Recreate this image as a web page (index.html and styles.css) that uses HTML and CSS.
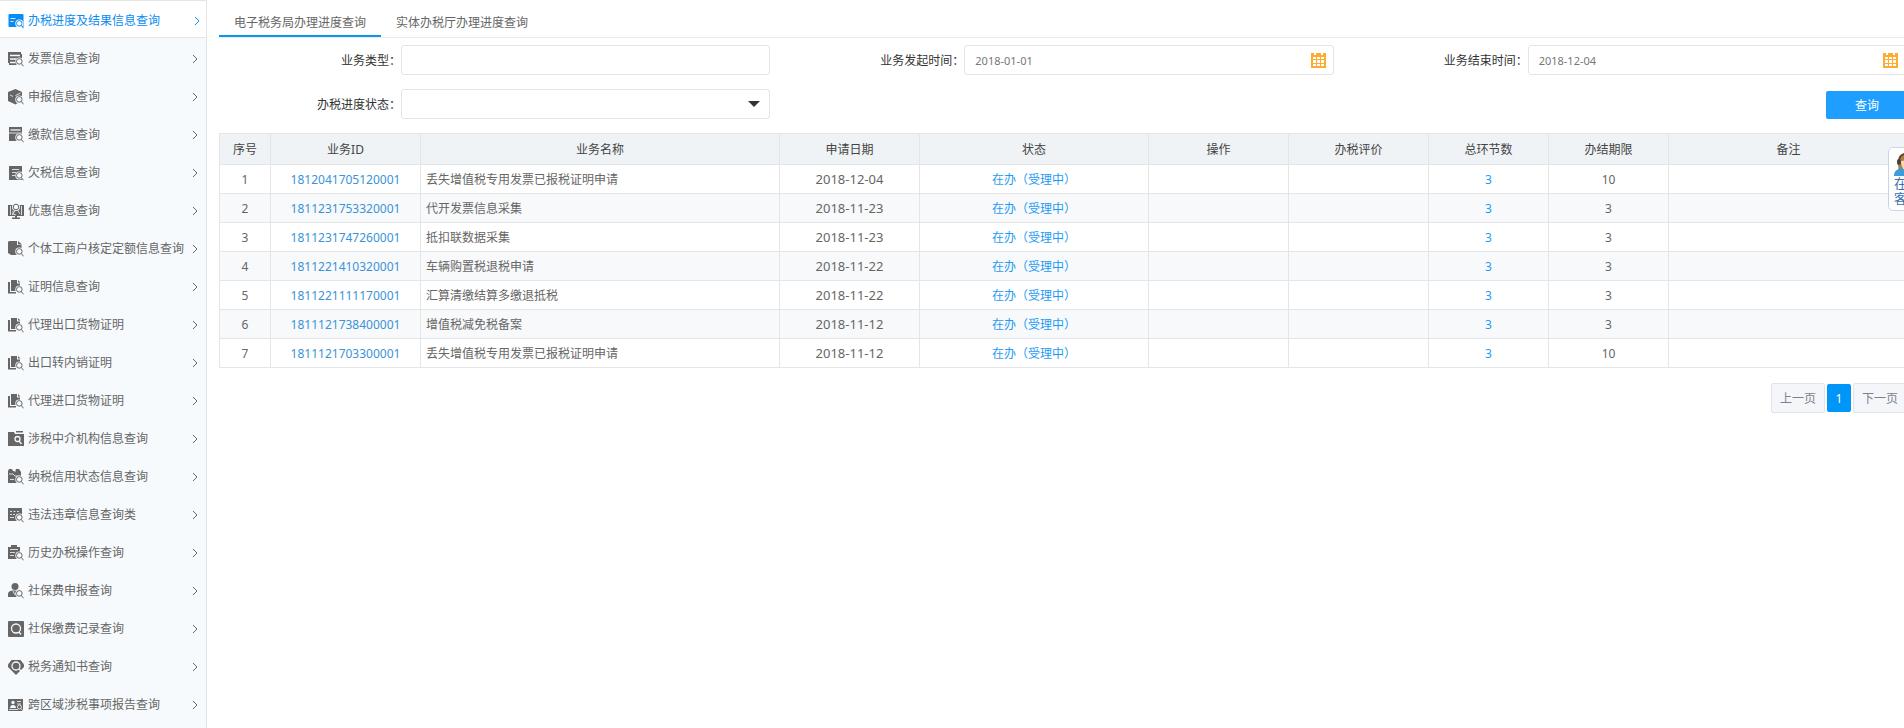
FILE: index.html
```html
<!DOCTYPE html>
<html lang="zh-CN">
<head>
<meta charset="utf-8">
<title>办税进度及结果信息查询</title>
<link rel="stylesheet" href="styles.css">
</head>
<body>
<svg class="sprite" aria-hidden="true">
  <symbol id="mag" viewBox="0 0 16 16">
    <circle class="bg" cx="11.3" cy="10.4" r="4"/>
    <circle class="line" cx="11.3" cy="10.4" r="2.8"/>
    <path class="line" d="M13.300 12.500l2.200 2.800"/>
  </symbol>
  <symbol id="i-card" viewBox="0 0 16 16"><path d="M1.500 1h13a1 1 0 0 1 1 1v12h-14a1 1 0 0 1-1-1V2a1 1 0 0 1 1-1z"/><path class="cut thin" d="M2.500 5.500h5M2.500 8.500h3"/><use href="#mag"/></symbol>
  <symbol id="i-invoice" viewBox="0 0 16 16"><path d="M0 1h13v2h1v11H1v-2H0z"/><path class="cut" d="M2 4.500h10M2 8h6M2 11.500h5"/><use href="#mag"/></symbol>
  <symbol id="i-box" viewBox="0 0 16 16"><path d="M7.500 0L14 3v8l-6.500 4.500L0 12V3z"/><path class="cut thin" d="M2 6l3 1.500M7.500 6.500l5-2.500"/><use href="#mag"/></symbol>
  <symbol id="i-pay" viewBox="0 0 16 16"><path d="M1 0h13v14H1z"/><path class="cut" d="M2.500 3h10"/><path class="cut thin" d="M1 6h13"/><use href="#mag"/></symbol>
  <symbol id="i-owe" viewBox="0 0 16 16"><path d="M1 1h13v14H1z"/><path class="cut thin" d="M4 4.500h7M4 7.500h4M4 10.500h3"/><use href="#mag"/></symbol>
  <symbol id="i-screen" viewBox="0 0 16 16"><path d="M0 2h16v11H0zM7 13h2v2H7zM4 14.500h8v1.500H4z"/><path class="cut thin" d="M2.500 3v9M13.500 3v9M4 12l3-4"/><circle class="bg" cx="8" cy="4" r="4"/><circle class="line" cx="8" cy="4" r="2.800"/><path class="cut thin" d="M9.500 7l2.500 4M5 8v3l3 1"/></symbol>
  <symbol id="i-file" viewBox="0 0 16 16"><path d="M1 0h8v4h4.500v10H3L0 12V1zM10 0l4 3.500h-4z"/><use href="#mag"/></symbol>
  <symbol id="i-docs" viewBox="0 0 16 16"><path d="M0 3h2v10h6v1.500H0zM3 1h6v3.500h3V12H3zM10 1l2.500 2.500H10z"/><use href="#mag"/></symbol>
  <symbol id="i-folder" viewBox="0 0 16 16"><path d="M0 1h6l1 2h9v12H0zM8 0h7v1.500H8z"/><circle class="cut" cx="9.500" cy="8" r="2.500"/><path class="cut" d="M11 10l2.500 3"/></symbol>
  <symbol id="i-credit" viewBox="0 0 16 16"><path d="M1 0h3l1 2h2l1-2h3l2 3v11H0V2z"/><path class="cut thin" d="M1 5h4l2 2h5M2 10.500h4M7 0v3"/><use href="#mag"/></symbol>
  <symbol id="i-rule" viewBox="0 0 16 16"><path d="M0 1h14v13H0z"/><path class="cut thin" d="M2 4.500h2M5.500 4.500h2M9 4.500h2M2 7.500h2M5 7.500h2M2 10.500h4"/><use href="#mag"/></symbol>
  <symbol id="i-board" viewBox="0 0 16 16"><path d="M0 2h3V0h6v2h3v12H0z"/><path class="cut thin" d="M2 4.500h8M2 7.500h5M2 10.500h4"/><use href="#mag"/></symbol>
  <symbol id="i-user" viewBox="0 0 16 16"><circle cx="7" cy="3.500" r="3.500"/><path d="M0 14v-3c0-2 2-3.500 5-3.500h4c3 0 4 2 4 6.500z"/><path class="cut thin" d="M5 8l2 4"/><use href="#mag"/></symbol>
  <symbol id="i-square" viewBox="0 0 16 16"><rect width="16" height="16" rx="1"/><circle class="cut" cx="8" cy="7.500" r="4.500"/><path class="cut" d="M11 11l2 2.500"/></symbol>
  <symbol id="i-badge" viewBox="0 0 16 16"><path d="M3.500 1h9L16 5.500V8l-8 8-8-8V5.500z"/><circle class="cut" cx="8" cy="7" r="4"/><circle cx="8" cy="7" r="2.400"/><path class="cut" d="M11 10l2 2"/></symbol>
  <symbol id="i-people" viewBox="0 0 16 16"><path d="M0 2h15v12H0z"/><circle class="bg" cx="5" cy="5.500" r="1.700"/><path class="bg" d="M2 11c0-4 6-4 6 0z"/><path class="cut thin" d="M9 4.500h4M9 7h4M1 12.500h9"/><circle class="cut thin" cx="11.500" cy="10" r="2"/><path class="cut thin" d="M13 11.500l2.500 3"/></symbol>
  <symbol id="chev" viewBox="0 0 6 10"><path class="line" d="M1 1l4 4-4 4"/></symbol>
  <symbol id="cal" viewBox="0 0 15 15"><path fill="#ffab30" d="M0 0h15v15H0z"/><path fill="#fff" d="M3 0h2v2H3zM10 0h2v2h-2zM2 4h11v9H2z"/><path fill="none" stroke="#ffab30" d="M5.500 4v9M9.500 4v9M2 6.500h11M2 10.500h11"/></symbol>
</svg>
<div class="page">
  <nav class="side" aria-label="查询菜单">
    <a class="item active" href="#"><svg class="ico"><use href="#i-card"/></svg><span>办税进度及结果信息查询</span><svg class="chev"><use href="#chev"/></svg></a>
    <a class="item" href="#"><svg class="ico"><use href="#i-invoice"/></svg><span>发票信息查询</span><svg class="chev"><use href="#chev"/></svg></a>
    <a class="item" href="#"><svg class="ico"><use href="#i-box"/></svg><span>申报信息查询</span><svg class="chev"><use href="#chev"/></svg></a>
    <a class="item" href="#"><svg class="ico"><use href="#i-pay"/></svg><span>缴款信息查询</span><svg class="chev"><use href="#chev"/></svg></a>
    <a class="item" href="#"><svg class="ico"><use href="#i-owe"/></svg><span>欠税信息查询</span><svg class="chev"><use href="#chev"/></svg></a>
    <a class="item" href="#"><svg class="ico"><use href="#i-screen"/></svg><span>优惠信息查询</span><svg class="chev"><use href="#chev"/></svg></a>
    <a class="item" href="#"><svg class="ico"><use href="#i-file"/></svg><span>个体工商户核定定额信息查询</span><svg class="chev"><use href="#chev"/></svg></a>
    <a class="item" href="#"><svg class="ico"><use href="#i-docs"/></svg><span>证明信息查询</span><svg class="chev"><use href="#chev"/></svg></a>
    <a class="item" href="#"><svg class="ico"><use href="#i-docs"/></svg><span>代理出口货物证明</span><svg class="chev"><use href="#chev"/></svg></a>
    <a class="item" href="#"><svg class="ico"><use href="#i-docs"/></svg><span>出口转内销证明</span><svg class="chev"><use href="#chev"/></svg></a>
    <a class="item" href="#"><svg class="ico"><use href="#i-docs"/></svg><span>代理进口货物证明</span><svg class="chev"><use href="#chev"/></svg></a>
    <a class="item" href="#"><svg class="ico"><use href="#i-folder"/></svg><span>涉税中介机构信息查询</span><svg class="chev"><use href="#chev"/></svg></a>
    <a class="item" href="#"><svg class="ico"><use href="#i-credit"/></svg><span>纳税信用状态信息查询</span><svg class="chev"><use href="#chev"/></svg></a>
    <a class="item" href="#"><svg class="ico"><use href="#i-rule"/></svg><span>违法违章信息查询类</span><svg class="chev"><use href="#chev"/></svg></a>
    <a class="item" href="#"><svg class="ico"><use href="#i-board"/></svg><span>历史办税操作查询</span><svg class="chev"><use href="#chev"/></svg></a>
    <a class="item" href="#"><svg class="ico"><use href="#i-user"/></svg><span>社保费申报查询</span><svg class="chev"><use href="#chev"/></svg></a>
    <a class="item" href="#"><svg class="ico"><use href="#i-square"/></svg><span>社保缴费记录查询</span><svg class="chev"><use href="#chev"/></svg></a>
    <a class="item" href="#"><svg class="ico"><use href="#i-badge"/></svg><span>税务通知书查询</span><svg class="chev"><use href="#chev"/></svg></a>
    <a class="item" href="#"><svg class="ico"><use href="#i-people"/></svg><span>跨区域涉税事项报告查询</span><svg class="chev"><use href="#chev"/></svg></a>
  </nav>

  <main class="main">
    <div class="tabs">
      <a class="tab on" href="#">电子税务局办理进度查询</a>
      <a class="tab" href="#">实体办税厅办理进度查询</a>
    </div>

    <form class="filters">
      <div class="field">
        <label for="type">业务类型：</label>
        <div class="control"><input id="type" type="text"></div>
      </div>
      <div class="field">
        <label for="from">业务发起时间：</label>
        <div class="control"><input id="from" type="text" value="2018-01-01"><svg class="cal"><use href="#cal"/></svg></div>
      </div>
      <div class="field last">
        <label for="to">业务结束时间：</label>
        <div class="control"><input id="to" type="text" value="2018-12-04"><svg class="cal"><use href="#cal"/></svg></div>
      </div>
      <div class="field">
        <label for="state">办税进度状态：</label>
        <div class="control"><select id="state"><option></option></select><svg class="caret" viewBox="0 0 12 6"><path d="M0 0h12L6 6z"/></svg></div>
      </div>
      <div class="actions"><button class="search" type="button">查询</button></div>
    </form>

    <table class="grid">
      <colgroup><col class="c-no"><col class="c-id"><col class="c-name"><col class="c-mid"><col class="c-state"><col class="c-mid"><col class="c-mid"><col class="c-num"><col class="c-num"><col></colgroup>
      <thead>
        <tr><th>序号</th><th>业务ID</th><th>业务名称</th><th>申请日期</th><th>状态</th><th>操作</th><th>办税评价</th><th>总环节数</th><th>办结期限</th><th>备注</th></tr>
      </thead>
      <tbody>
        <tr><td>1</td><td><a class="id" href="#">1812041705120001</a></td><td class="name">丢失增值税专用发票已报税证明申请</td><td class="date">2018-12-04</td><td><a href="#">在办（受理中）</a></td><td></td><td></td><td><a href="#">3</a></td><td>10</td><td></td></tr>
        <tr><td>2</td><td><a class="id" href="#">1811231753320001</a></td><td class="name">代开发票信息采集</td><td class="date">2018-11-23</td><td><a href="#">在办（受理中）</a></td><td></td><td></td><td><a href="#">3</a></td><td>3</td><td></td></tr>
        <tr><td>3</td><td><a class="id" href="#">1811231747260001</a></td><td class="name">抵扣联数据采集</td><td class="date">2018-11-23</td><td><a href="#">在办（受理中）</a></td><td></td><td></td><td><a href="#">3</a></td><td>3</td><td></td></tr>
        <tr><td>4</td><td><a class="id" href="#">1811221410320001</a></td><td class="name">车辆购置税退税申请</td><td class="date">2018-11-22</td><td><a href="#">在办（受理中）</a></td><td></td><td></td><td><a href="#">3</a></td><td>3</td><td></td></tr>
        <tr><td>5</td><td><a class="id" href="#">1811221111170001</a></td><td class="name">汇算清缴结算多缴退抵税</td><td class="date">2018-11-22</td><td><a href="#">在办（受理中）</a></td><td></td><td></td><td><a href="#">3</a></td><td>3</td><td></td></tr>
        <tr><td>6</td><td><a class="id" href="#">1811121738400001</a></td><td class="name">增值税减免税备案</td><td class="date">2018-11-12</td><td><a href="#">在办（受理中）</a></td><td></td><td></td><td><a href="#">3</a></td><td>3</td><td></td></tr>
        <tr><td>7</td><td><a class="id" href="#">1811121703300001</a></td><td class="name">丢失增值税专用发票已报税证明申请</td><td class="date">2018-11-12</td><td><a href="#">在办（受理中）</a></td><td></td><td></td><td><a href="#">3</a></td><td>10</td><td></td></tr>
      </tbody>
    </table>

    <div class="pager">
      <button type="button">上一页</button>
      <button type="button" class="current">1</button>
      <button type="button">下一页</button>
    </div>
  </main>
</div>

<a class="service" href="#">
  <svg class="agent" viewBox="0 0 26 24">
    <path fill="#b8793f" d="M4 22C5 17 4 14 4 9c0-6 4-8 9-8s9 2 9 8c0 5-1 8 0 13z"/>
    <path fill="#3d9bdc" d="M0 24c0-5 3-7 8-8h10c5 1 8 3 8 8z"/>
    <path fill="#fff" d="M9 16l4 6 4-6z"/>
    <path fill="#fbd9b8" d="M7 9c4 0 6-2 7-4 1 2 3 3 5 4 0 5-2 9-6 9s-6-4-6-9z"/>
    <path fill="none" stroke="#444" stroke-width="1.5" d="M5 9c0-10 16-10 16 0"/>
    <rect x="3" y="7" width="4" height="6" rx="2" fill="#444"/>
  </svg>
  <span>在线</span><span>客服</span>
</a>
</body>
</html>
```
FILE: styles.css
```css
* { box-sizing: border-box; }
body {
  margin: 0;
  overflow: hidden;
  font: 12px/18px "Noto Sans", "Noto Sans CJK SC", sans-serif;
  color: #666;
  background: #fff;
}
a { color: inherit; text-decoration: none; }
button, input, select { font: inherit; margin: 0; }
.sprite { position: absolute; width: 0; height: 0; }
.page { display: flex; height: 100vh; }

.line { fill: none; stroke: currentColor; stroke-width: 1; }
.bg { fill: var(--bg); }
.cut { fill: none; stroke: var(--bg); stroke-width: 1.3; }
.thin { stroke-width: 0.8; }

.side {
  --bg: #f6fafd;
  flex: 0 0 207px;
  background: var(--bg);
  border-right: 1px solid #e3e5e7;
  overflow: hidden;
}
.item {
  display: flex;
  align-items: center;
  gap: 4px;
  height: 38px;
  padding: 4px 8px 0;
  white-space: nowrap;
}
.item.active {
  --bg: #fff;
  color: #0b8cf3;
  background: #fff;
  border-top: 1px solid #e3e5e7;
  border-bottom: 1px solid #e3e5e7;
  padding-right: 6px;
}
.ico { width: 16px; height: 16px; fill: currentColor; }
.chev { width: 6px; height: 10px; margin-left: auto; }

.main { flex: 1; min-width: 0; padding-left: 12px; }
.tabs {
  display: flex;
  height: 38px;
  border-bottom: 1px solid #e8eaec;
}
.tab { padding: 14px 15px 0; height: 37px; }
.tab.on { border-bottom: 2px solid #0a96f2; }

.filters {
  display: grid;
  grid-template-columns: repeat(3, 1fr);
  row-gap: 14px;
  margin-right: -5px;
  padding-top: 7px;
}
.field { display: flex; align-items: center; padding-right: 12px; }
.field.last { padding-right: 3px; }
.field label { flex: 0 0 182px; padding-top: 2px; text-align: right; color: #333; }
.control { position: relative; flex: 1; }
.control input, .control select {
  display: block;
  width: 100%;
  height: 30px;
  padding: 0 10px;
  border: 1px solid #e4e4e4;
  border-radius: 3px;
  background: #fff;
  color: #777;
  font-size: 11px;
  appearance: none;
}
.cal, .caret { position: absolute; pointer-events: none; }
.cal { width: 15px; height: 15px; right: 8px; top: 8px; }
.caret { width: 12px; height: 6px; right: 10px; top: 12px; fill: #333; }
.actions { grid-column: 3; padding: 2px 1px 0 0; text-align: right; }
.search {
  width: 82px;
  height: 28px;
  padding: 2px 0 0;
  border: 0;
  border-radius: 2px;
  background: #1e9fff;
  color: #fff;
}

.grid {
  width: calc(100% + 5px);
  margin-top: 14px;
  border-collapse: collapse;
  table-layout: fixed;
  text-align: center;
}
.c-no { width: 51px; }
.c-id { width: 150px; }
.c-name { width: 359px; }
.c-mid { width: 140px; }
.c-state { width: 229px; }
.c-num { width: 120px; }
.grid th, .grid td { border: 1px solid #e3e5e6; padding: 2px 5px 0; height: 29px; }
.grid th { height: 31px; background: #eff3f6; color: #444; font-weight: 400; }
.grid tbody tr:nth-child(even) { background: #f8f9fb; }
.grid td a { color: #1e9bf5; }
.grid td a.id { color: #3a93d8; }
.grid td.name { text-align: left; }
.grid td.date { padding-top: 0; font-size: 13px; }

.pager { display: flex; justify-content: flex-end; align-items: center; gap: 2px; margin: 15px -3px 0 0; }
.pager button {
  height: 30px;
  padding: 2px 8px 0;
  border: 1px solid #e2e4e8;
  border-radius: 2px;
  background: #f5f6f9;
  color: #7a828c;
}
.pager .current { width: 24px; height: 28px; border: 0; background: #0096f7; color: #fff; }

.service {
  position: fixed;
  top: 147px;
  right: -22px;
  width: 38px;
  display: flex;
  flex-direction: column;
  align-items: center;
  padding: 4px 0 4px;
  border: 1px solid #c9d5e4;
  border-radius: 5px;
  background: #fff;
  color: #3b70b5;
  font-size: 13px;
  line-height: 15px;
}
.agent { width: 26px; height: 24px; }
```
